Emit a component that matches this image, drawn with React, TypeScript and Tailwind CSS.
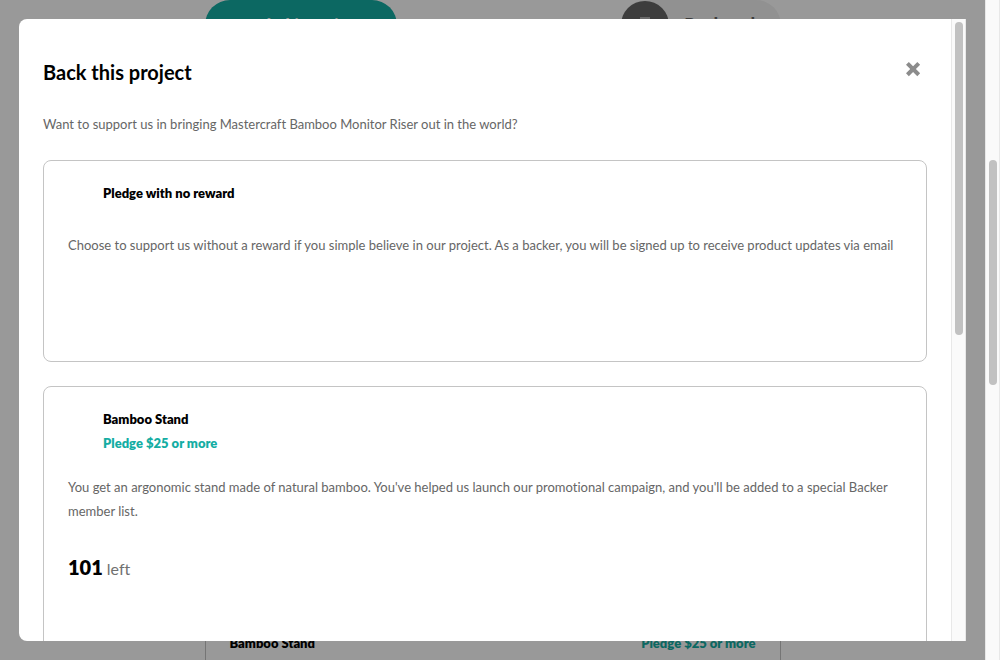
import type { ReactNode } from 'react';

function Track({ children }: { children: ReactNode }) {
  return (
    <div aria-hidden="true" className="w-[15px] shrink-0 border-x border-[#e8e8e8] bg-[#fafafa] pr-[2px] pl-[3px]">
      {children}
    </div>
  );
}

function Backdrop() {
  return (
    <main className="mx-auto flex h-full w-[576px] max-w-full flex-col">
      <div className="flex items-start justify-between">
        <button className="h-[50px] w-48 rounded-full bg-[#14ada3] pb-px text-base font-extrabold text-white">Back this project</button>
        <button className="flex h-[50px] w-40 items-center gap-4 rounded-full bg-[#f2f2f2] font-extrabold text-[#666666]">
          <span className="flex size-12 shrink-0 items-center justify-center rounded-full bg-[#666666]">
            <svg width="10" height="16" viewBox="0 0 10 16" fill="#b1b1b1">
              <path d="M0 0v16l5-4.5 5 4.5V0z" />
            </svg>
          </span>
          <span className="pb-0.5">Bookmark</span>
        </button>
      </div>
      <section className="mt-auto flex h-[44px] justify-between border-x border-[#c4c4c4] px-6 pt-[15px] text-[13px] leading-6 font-extrabold">
        <h3>Bamboo Stand</h3>
        <p className="text-[#14ada3]">Pledge $25 or more</p>
      </section>
    </main>
  );
}

type PledgeProps = { title: string; price?: string; text: string; left?: number };

function Pledge({ title, price, text, left }: PledgeProps) {
  return (
    <article className="min-h-[202px] shrink-0 rounded-lg border border-[#c4c4c4] px-6 pt-5 pb-[72px]">
      <div className="pl-[35px] text-[13px] leading-6 font-extrabold">
        <h3>{title}</h3>
        {price && <p className="text-[#14ada3]">{price}</p>}
      </div>
      <p className={`${price ? 'mt-5' : 'mt-7'} text-[13px] leading-6 text-[#666666]`}>{text}</p>
      {left !== undefined && (
        <p className="mt-7 flex items-baseline gap-1 leading-8 text-[#707070]">
          <strong className="text-xl leading-8 font-extrabold text-black">{left}</strong>left
        </p>
      )}
    </article>
  );
}

export default function App() {
  return (
    <div className="flex h-screen overflow-hidden bg-white font-['Lato',sans-serif] text-black [font-variant-ligatures:no-common-ligatures]">
      <div className="relative min-w-0 flex-1">
        <Backdrop />
        <div className="absolute inset-0 flex bg-black/40 p-[19px]">
          <div role="dialog" aria-modal="true" aria-labelledby="dialog-title" className="flex flex-1 overflow-hidden rounded-l-lg bg-white">
            <div className="flex min-w-0 flex-1 flex-col overflow-hidden p-6">
              <header className="flex items-center justify-between pt-[11px] pr-1.5">
                <h2 id="dialog-title" className="text-xl leading-9 font-bold">Back this project</h2>
                <button aria-label="Close" className="mb-[6px]">
                  <svg width="15" height="15" viewBox="0 0 15 15" fill="#8c8c8c">
                    <path d="M11.314 0l2.828 2.828L9.9 7.071l4.243 4.243-2.828 2.828L7.07 9.9l-4.243 4.243L0 11.314 4.242 7.07 0 2.828 2.828 0l4.243 4.242L11.314 0z" />
                  </svg>
                </button>
              </header>
              <p className="mt-[22px] text-[13px] leading-6 text-[#666666]">
                Want to support us in bringing Mastercraft Bamboo Monitor Riser out in the world?
              </p>
              <div className="mt-6 flex flex-col gap-6">
                <Pledge
                  title="Pledge with no reward"
                  text="Choose to support us without a reward if you simple believe in our project. As a backer, you will be signed up to receive product updates via email"
                />
                <Pledge
                  title="Bamboo Stand"
                  price="Pledge $25 or more"
                  text="You get an argonomic stand made of natural bamboo. You've helped us launch our promotional campaign, and you'll be added to a special Backer member list."
                  left={101}
                />
              </div>
            </div>
            <Track>
              <div className="mt-[3px] h-[313px] rounded-full bg-[#c1c1c1]" />
            </Track>
          </div>
        </div>
      </div>
      <Track>
        <div className="mt-40 h-[225px] rounded-full bg-[#c1c1c1]" />
      </Track>
    </div>
  );
}
